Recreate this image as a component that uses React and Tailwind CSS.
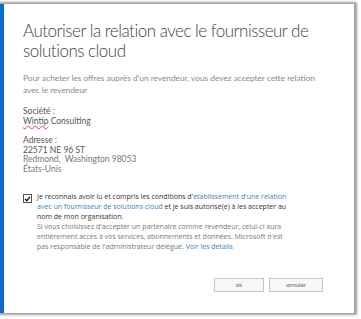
export default function App() {
  return (
    <div className="w-[361px] h-[319px] bg-white pt-[4px] overflow-hidden" style={{ fontFamily: 'Lato, "Open Sans", sans-serif' }}>
      <div className="w-[354px] h-[309px] bg-white border-l-[4px] border-[#0f6cc4] shadow-[1px_0_2px_2px_rgba(120,120,120,0.7)] flex flex-col pl-[19px] pr-[20px] pt-[17px]">
        <h1 className="text-[17px] leading-[20px] tracking-[-0.5px] font-light text-[#444] whitespace-nowrap">
          Autoriser la relation avec le fournisseur de
          <br />
          solutions cloud
        </h1>
        <p className="mt-[11px] text-[8.3px] leading-[12px] text-[#8a8a8a] whitespace-nowrap">
          Pour acheter les offres auprès d'un revendeur, vous devez accepter cette relation
          <br />
          avec le revendeur
        </p>

        <div className="mt-[10px] text-[8.5px] leading-[10px] text-[#555]">
          <p>Société :</p>
          <p>
            <span className="underline decoration-wavy decoration-[#e04040] decoration-1">Wintip</span> Consulting
          </p>
        </div>

        <div className="mt-[10px] text-[8.5px] leading-[9.5px] text-[#555]">
          <p>Adresse :</p>
          <p>22571 NE 96 ST</p>
          <p className="text-[#777]">Redmond,&nbsp; Washington 98053</p>
          <p className="text-[#777]">États-Unis</p>
        </div>

        <div className="mt-[18px] flex gap-[5px]">
          <div className="shrink-0 w-[9px] h-[9px] mt-[2px] border border-[#555] bg-white flex items-center justify-center">
            <svg viewBox="0 0 10 10" className="w-[8px] h-[8px]">
              <path d="M1.5 5 L4 7.5 L8.5 2" fill="none" stroke="#111" strokeWidth="2" />
            </svg>
          </div>
          <div className="text-[7px] leading-[10px] whitespace-nowrap" style={{ fontFamily: '"Open Sans", sans-serif' }}>
            <p className="text-[#333]">
              Je reconnais avoir lu et compris les conditions d'
              <span className="text-[#3b7fbf]">établissement d'une relation</span>
              <br />
              <span className="text-[#3b7fbf]">avec un fournisseur de solutions cloud</span> et je suis autorisé(e) à les
              accepter au
              <br />
              nom de mon organisation.
            </p>
            <p className="text-[#777]">
              Si vous choisissez d'accepter un partenaire comme revendeur, celui-ci aura
              <br />
              entièrement accès à vos services, abonnements et données. Microsoft n'est
              <br />
              pas responsable de l'administrateur délégué. <span className="text-[#3b7fbf]">Voir les détails</span>
            </p>
          </div>
        </div>

        <div className="mt-auto mb-[21px] flex justify-end gap-[5px] pr-[11px]">
          <button className="w-[50px] h-[14px] border border-[#c6c6c6] bg-[#f7f7f7] text-[6px] text-[#666] leading-none">
            ok
          </button>
          <button className="w-[54px] h-[14px] border border-[#c6c6c6] bg-[#f7f7f7] text-[6px] text-[#666] leading-none">
            annuler
          </button>
        </div>
      </div>
    </div>
  );
}
